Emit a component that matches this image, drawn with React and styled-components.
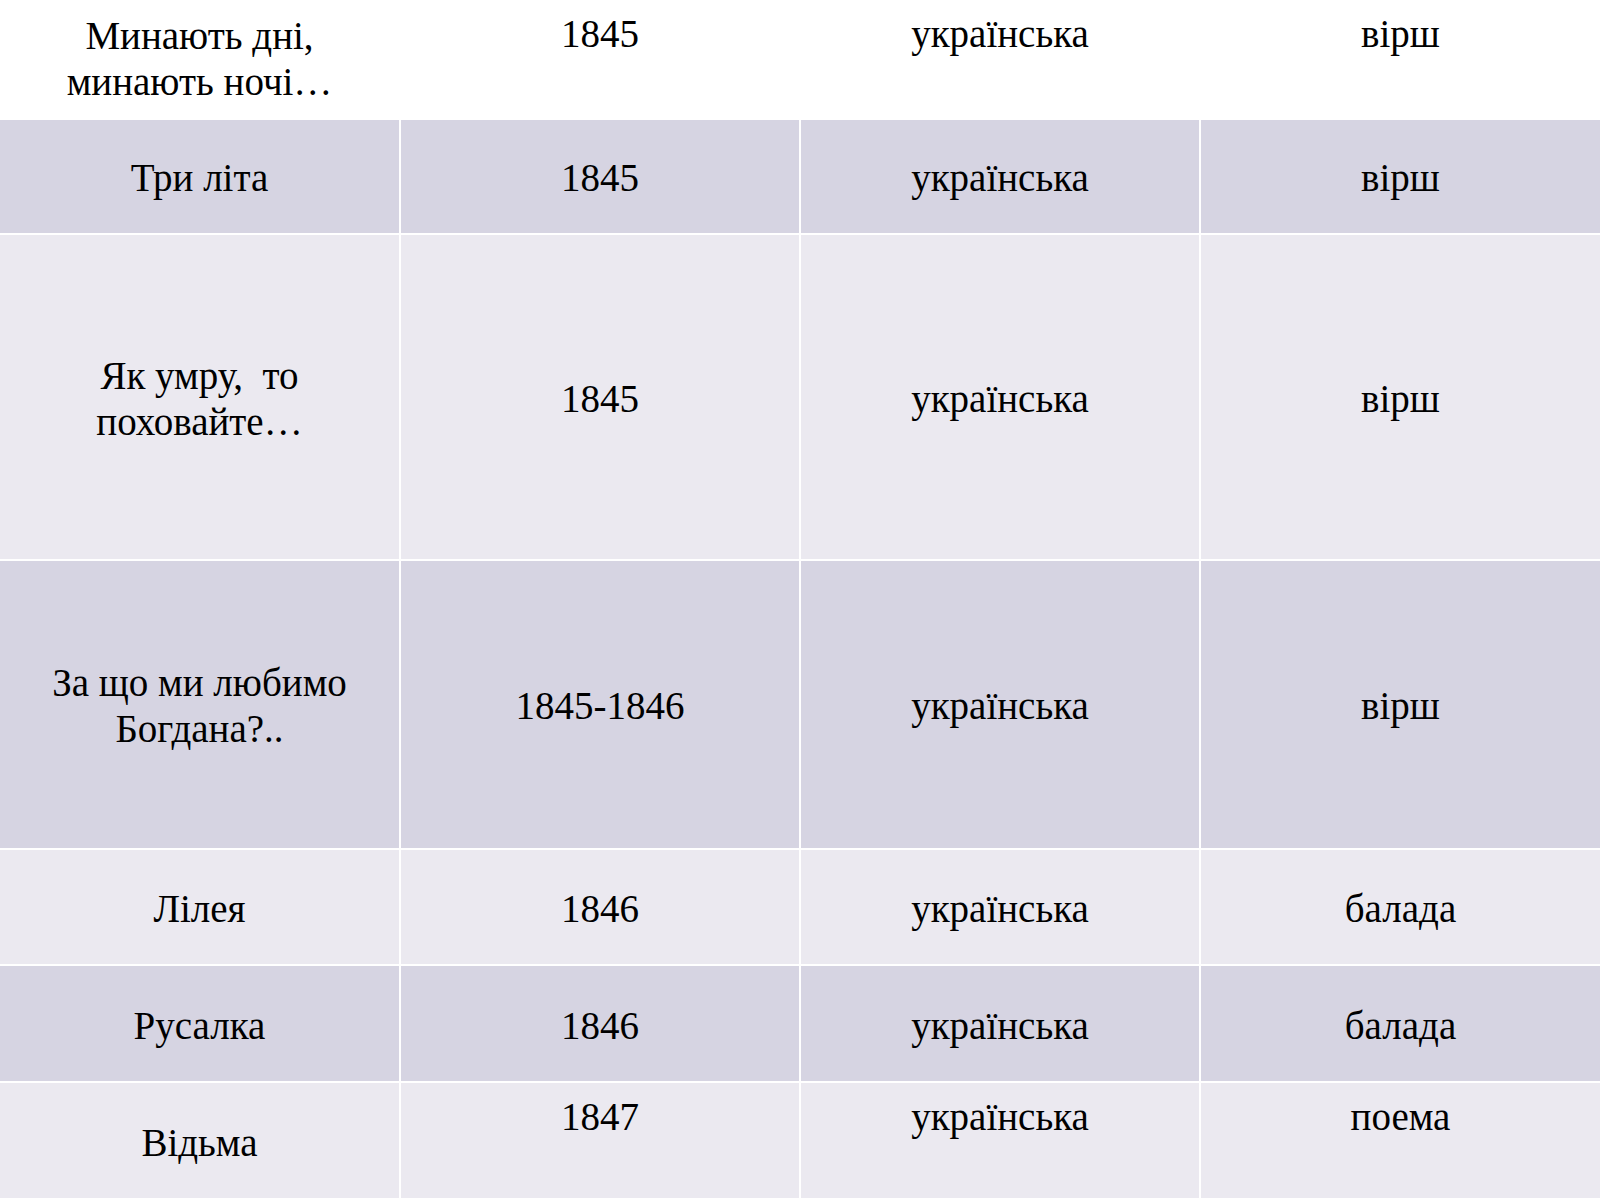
import React from 'react';
import styled, { createGlobalStyle } from 'styled-components';

const GlobalStyle = createGlobalStyle`
  html, body {
    margin: 0;
    padding: 0;
    background: #ffffff;
  }
  body {
    font-family: "Liberation Serif", "DejaVu Serif", serif;
    color: #000000;
  }
`;

const tones = {
  plain: '#ffffff',
  dark: '#d6d4e2',
  light: '#ebe9f0',
};

// Table
const Table = styled.div`
  width: 1600px;
  height: 1200px;
  display: flex;
  flex-direction: column;
  gap: 2px;
  background: #ffffff;
`;

const Row = styled.div`
  display: grid;
  grid-template-columns: 399px 398px 398px 399px;
  column-gap: 2px;
  height: ${props => props.h}px;
  flex: none;
`;

const Cell = styled.div`
  background: ${props => tones[props.tone]};
  display: flex;
  flex-direction: column;
  align-items: center;
  justify-content: ${props => (props.top ? 'flex-start' : 'center')};
  padding: ${props => (props.top ? '11px' : `${props.pad}px`)} 12px 0;
  text-align: center;
  font-family: "Liberation Serif", serif;
  font-size: 39px;
  line-height: 46px;
  box-sizing: border-box;
`;

const Line = styled.span`
  white-space: pre;
`;

const rows = [
  { h: 118, tone: 'plain', top: true, pad: 0, cells: ['Минають дні,\nминають ночі…', '1845', 'українська', 'вірш'] },
  { h: 113, tone: 'dark', pad: 3, cells: ['Три літа', '1845', 'українська', 'вірш'] },
  { h: 324, tone: 'light', pad: 4, cells: ['Як умру,  то\nпоховайте…', '1845', 'українська', 'вірш'] },
  { h: 287, tone: 'dark', pad: 3, cells: ['За що ми любимо\nБогдана?..', '1845-1846', 'українська', 'вірш'] },
  { h: 114, tone: 'light', pad: 4, cells: ['Лілея', '1846', 'українська', 'балада'] },
  { h: 115, tone: 'dark', pad: 4, cells: ['Русалка', '1846', 'українська', 'балада'] },
  { h: 115, tone: 'light', top: true, pad: 4, cells: ['Відьма', '1847', 'українська', 'поема'] },
];

export default function App() {
  return (
    <>
      <GlobalStyle />
      <Table>
        {rows.map((row, r) => (
          <Row key={r} h={row.h}>
            {row.cells.map((text, c) => (
              <Cell key={c} tone={row.tone} pad={row.pad} top={row.top && c > 0}>
                {text.split('\n').map((line, i) => (
                  <Line key={i}>{line}</Line>
                ))}
              </Cell>
            ))}
          </Row>
        ))}
      </Table>
    </>
  );
}
